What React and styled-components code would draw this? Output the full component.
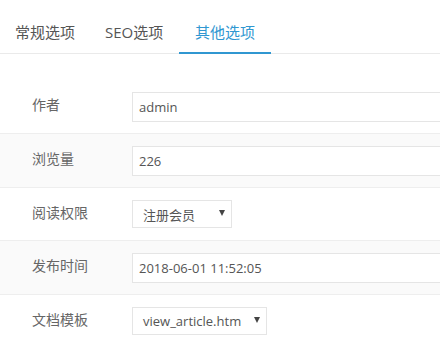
import React from "react";
import styled, { createGlobalStyle } from "styled-components";

const Global = createGlobalStyle`
  html, body { margin: 0; padding: 0; background: #fff; overflow: hidden; }
  body { font-family: "Open Sans", "Noto Sans CJK SC", sans-serif; }
`;

const Page = styled.div`
  width: 440px;
  height: 352px;
  overflow: hidden;
  background: #fff;
`;

const TabBar = styled.div`
  display: flex;
  height: 53px;
  border-bottom: 1px solid #eaeaea;
`;

const Tab = styled.div`
  position: relative;
  box-sizing: border-box;
  width: 90px;
  display: flex;
  align-items: center;
  padding: 9px 0 0 15px;
  font-size: 15px;
  white-space: nowrap;
  color: ${(p) => (p.$active ? "#3097d1" : "#555")};
  &::after {
    content: "";
    display: ${(p) => (p.$active ? "block" : "none")};
    position: absolute;
    left: -1px;
    right: -1px;
    bottom: -1px;
    height: 2px;
    background: #3097d1;
  }
`;

const Form = styled.div`
  margin-top: 25px;
`;

const Row = styled.div`
  box-sizing: border-box;
  height: ${(p) => p.$h || 54}px;
  display: grid;
  grid-template-columns: 132px 1fr;
  align-items: start;
  padding-top: 12px;
  border-top: 1px solid ${(p) => (p.$first ? "transparent" : "#eeeeee")};
  background: ${(p) => (p.$alt ? "#fafafa" : "#fff")};
`;

const Label = styled.div`
  padding-left: 32px;
  padding-top: 3px;
  line-height: 20px;
  font-size: 14px;
  color: #666;
`;

const Input = styled.div`
  box-sizing: border-box;
  width: 360px;
  height: 30px;
  display: flex;
  align-items: center;
  padding-left: 6px;
  border: 1px solid #e5e5e5;
  background: #fff;
  font-size: 13px;
  color: #555;
  white-space: nowrap;
`;

const Select = styled.div`
  box-sizing: border-box;
  width: ${(p) => p.$w}px;
  height: 28px;
  display: flex;
  align-items: center;
  justify-content: space-between;
  padding: 0 6px 0 10px;
  border: 1px solid #e5e5e5;
  background: #fff;
  font-size: 13px;
  color: #555;
  white-space: nowrap;
`;

const Arrow = styled.span`
  width: 0;
  height: 0;
  margin-top: -2px;
  border-left: 3px solid transparent;
  border-right: 3px solid transparent;
  border-top: 6px solid #444;
`;

export default function App() {
  return (
    <Page>
      <Global />
      <TabBar>
        <Tab>常规选项</Tab>
        <Tab>SEO选项</Tab>
        <Tab $active>其他选项</Tab>
      </TabBar>
      <Form>
        <Row $first>
          <Label>作者</Label>
          <Input>admin</Input>
        </Row>
        <Row $alt>
          <Label>浏览量</Label>
          <Input>226</Input>
        </Row>
        <Row $h={53}>
          <Label>阅读权限</Label>
          <Select $w={100}>
            注册会员
            <Arrow />
          </Select>
        </Row>
        <Row $alt>
          <Label>发布时间</Label>
          <Input>2018-06-01 11:52:05</Input>
        </Row>
        <Row>
          <Label>文档模板</Label>
          <Select $w={135}>
            view_article.htm
            <Arrow />
          </Select>
        </Row>
      </Form>
    </Page>
  );
}
